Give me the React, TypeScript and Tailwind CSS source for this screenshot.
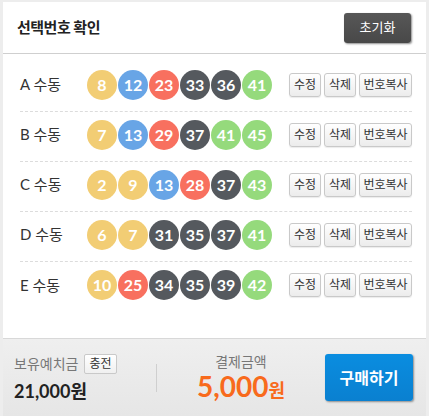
import React from "react";

const rows = [
  { label: "A", nums: [8, 12, 23, 33, 36, 41] },
  { label: "B", nums: [7, 13, 29, 37, 41, 45] },
  { label: "C", nums: [2, 9, 13, 28, 37, 43] },
  { label: "D", nums: [6, 7, 31, 35, 37, 41] },
  { label: "E", nums: [10, 25, 34, 35, 39, 42] },
];

function ballColor(n: number) {
  if (n <= 10) return "bg-[#f2cd74]";
  if (n <= 20) return "bg-[#68a5e6]";
  if (n <= 30) return "bg-[#f8705f]";
  if (n <= 40) return "bg-[#55595e]";
  return "bg-[#95da7c]";
}

function SmallButton({ children, width }: { children: React.ReactNode; width: string }) {
  return (
    <button
      className={`h-6 ${width} rounded-[3px] border border-[#c9c9c9] bg-gradient-to-b from-white to-[#ececec] text-[12px] leading-none text-[#333] shadow-[0_1px_1px_rgba(0,0,0,0.08)]`}
    >
      {children}
    </button>
  );
}

export default function App() {
  return (
    <div
      className="h-[416px] w-[429px] bg-[#ededed] pl-[3px] pr-[3px] pt-[2px]"
      style={{ fontFamily: 'Lato, "Noto Sans CJK KR", sans-serif' }}
    >
      <div className="flex h-[414px] flex-col bg-white">
        {/* header */}
        <div className="flex h-[52px] items-center justify-between border-b border-[#cfcfcf] pl-[14px] pr-[15px]">
          <h1 className="text-[15px] font-bold tracking-[-0.5px] text-[#222]">선택번호 확인</h1>
          <button className="h-[30px] w-[67px] rounded-[3px] bg-gradient-to-b from-[#575757] to-[#484848] text-[13px] text-white shadow-[1px_1px_2px_rgba(0,0,0,0.45)]">
            초기화
          </button>
        </div>

        {/* rows */}
        <div className="flex-1 pl-[17px] pr-[14px] pt-[8px]">
          {rows.map((row, i) => (
            <div
              key={row.label}
              className={`flex h-[50px] items-center pb-[4px] ${i < rows.length - 1 ? "border-b border-dashed border-[#dcdcdc]" : ""}`}
            >
              <div className="w-[67px] text-[15px] text-[#333]">{row.label} 수동</div>
              <div className="flex">
                {row.nums.map((n, j) => (
                  <div
                    key={j}
                    className={`mr-[1px] flex h-[30px] w-[30px] items-center justify-center rounded-full text-[16px] font-bold text-white ${ballColor(n)}`}
                  >
                    {n}
                  </div>
                ))}
              </div>
              <div className="ml-auto flex gap-[3px]">
                <SmallButton width="w-[32px]">수정</SmallButton>
                <SmallButton width="w-[32px]">삭제</SmallButton>
                <SmallButton width="w-[53px]">번호복사</SmallButton>
              </div>
            </div>
          ))}
        </div>

        {/* footer */}
        <div className="flex h-[78px] items-center border-t border-[#d8d8d8] bg-gradient-to-b from-[#efefef] to-[#e6e6e6] pl-[11px] pr-[13px]">
          <div className="-mt-[2px] w-[142px]">
            <div className="flex items-center gap-[6px]">
              <span className="text-[14px] text-[#777]">보유예치금</span>
              <button className="h-[20px] rounded-[2px] border border-[#c9c9c9] bg-gradient-to-b from-white to-[#f0f0f0] px-[4px] text-[12px] leading-none text-[#333]">
                충전
              </button>
            </div>
            <div className="mt-[8px] text-[18px] font-bold leading-none text-[#222]">21,000원</div>
          </div>
          <div className="h-[28px] w-px bg-[#cfcfcf]" />
          <div className="-mt-[4px] flex flex-1 flex-col items-center">
            <span className="text-[14px] text-[#777]">결제금액</span>
            <span className="font-bold leading-none text-[#f86a1c]">
              <span className="text-[28px]">5,000</span>
              <span className="text-[18px]">원</span>
            </span>
          </div>
          <button className="h-[47px] w-[88px] rounded-[3px] bg-gradient-to-b from-[#0a8de0] to-[#0a80d0] text-[16px] font-bold text-white shadow-[1px_1px_2px_rgba(0,0,0,0.4)]">
            구매하기
          </button>
        </div>
      </div>
    </div>
  );
}
